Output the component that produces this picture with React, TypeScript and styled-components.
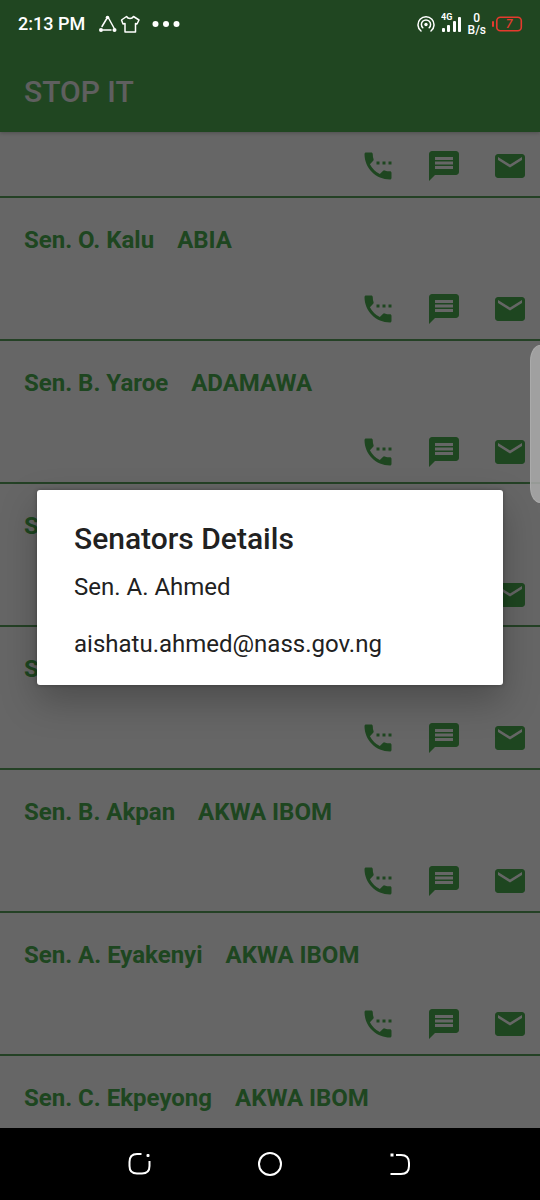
import React from "react";
import styled, { createGlobalStyle } from "styled-components";
import { MdEmail, MdMessage, MdSettingsPhone } from "react-icons/md";

const GlobalStyle = createGlobalStyle`
  * { box-sizing: border-box; }
  body { margin: 0; background: #000; font-family: Roboto, "Noto Sans", sans-serif; }
  h1, h2, p, ul { margin: 0; padding: 0; }
  button { margin: 0; padding: 0; border: 0; background: none; color: inherit; font: inherit; }
`;

const Phone = styled.div`
  position: relative;
  display: flex;
  flex-direction: column;
  height: 100vh;
  overflow: hidden;
`;

const Screen = styled.div`
  position: relative;
  flex: 1;
  min-height: 0;
  display: flex;
  flex-direction: column;
  background: #fff;
`;

const AppBar = styled.header`
  position: relative;
  flex: none;
  padding: 72px 24px 20px;
  background: #50b053;
  box-shadow: 0 1px 4px rgba(0, 0, 0, 0.25);
`;

const AppTitle = styled.h1`
  color: #eee;
  font-size: 30px;
  line-height: 40px;
  font-weight: 500;
`;

const List = styled.ul`
  flex: 1;
  min-height: 0;
  overflow: hidden;
  list-style: none;
  color: #4cb050;
`;

const Row = styled.li<{ $cut?: boolean }>`
  padding: ${(p) => (p.$cut ? 16 : 28)}px 12px 12px;
  border-bottom: 2px solid #5ba25e;
`;

const Name = styled.h2`
  display: flex;
  gap: 23px;
  margin: 0 12px 37px;
  font-size: 24px;
  line-height: 28px;
  font-weight: 700;
  white-space: nowrap;
`;

const Actions = styled.div`
  display: flex;
  justify-content: flex-end;
  gap: 30px;
`;

const IconButton = styled.button`
  display: flex;
  width: 36px;
  height: 36px;
  font-size: 36px;
`;

const Scrim = styled.div`
  position: absolute;
  inset: 0;
  display: flex;
  align-items: center;
  justify-content: center;
  padding: 46px 37px 0;
  background: rgba(0, 0, 0, 0.6);
`;

const Dialog = styled.section`
  width: 100%;
  padding: 31px 37px 27px;
  border-radius: 3px;
  background: #fff;
  color: #212121;
  box-shadow: 0 16px 36px rgba(0, 0, 0, 0.25), 0 0 4px rgba(0, 0, 0, 0.3);
`;

const DialogTitle = styled.h2`
  margin-bottom: 16px;
  font-size: 30px;
  line-height: 36px;
  font-weight: 500;
`;

const DialogBody = styled.div`
  display: grid;
  gap: 29px;
  font-size: 24px;
  line-height: 28px;
`;

const StatusBar = styled.div`
  position: absolute;
  top: 0;
  left: 0;
  right: 0;
  height: 48px;
  padding: 0 17px 0 18px;
  display: flex;
  align-items: center;
  color: #fff;
`;

const Clock = styled.span`
  margin-right: 13px;
  font-size: 18px;
  line-height: 24px;
  font-weight: 500;
`;

const StatusIcons = styled.div`
  display: flex;
  align-items: center;
  margin-left: auto;
  gap: 6px;
`;

const Speed = styled.div`
  font-size: 12px;
  line-height: 12px;
  font-weight: 500;
  text-align: center;
`;

const EdgeHandle = styled.div`
  position: absolute;
  top: 345px;
  right: 0;
  width: 10px;
  height: 158px;
  border: 1px solid #aaa;
  border-right: 0;
  border-radius: 10px 0 0 10px / 16px 0 0 16px;
  background: rgba(170, 170, 170, 0.85);
`;

const NavBar = styled.nav`
  flex: none;
  display: flex;
  align-items: center;
  justify-content: center;
  gap: 94px;
  height: 72px;
  background: #000;
  color: #fff;
`;

const senators = [
  { name: "Sen. O. Kalu", state: "ABIA" },
  { name: "Sen. B. Yaroe", state: "ADAMAWA" },
  { name: "Sen. A. Ahmed", state: "ADAMAWA" },
  { name: "Sen. I. Abbo", state: "ADAMAWA" },
  { name: "Sen. B. Akpan", state: "AKWA IBOM" },
  { name: "Sen. A. Eyakenyi", state: "AKWA IBOM" },
  { name: "Sen. C. Ekpeyong", state: "AKWA IBOM" },
];

const ContactActions = () => (
  <Actions>
    <IconButton aria-label="Call"><MdSettingsPhone /></IconButton>
    <IconButton aria-label="Message"><MdMessage /></IconButton>
    <IconButton aria-label="Email"><MdEmail /></IconButton>
  </Actions>
);

const Notifications = () => (
  <svg width="84" height="24" viewBox="0 0 84 24" fill="none" stroke="currentColor" strokeLinejoin="round" strokeLinecap="round">
    <g strokeWidth="1.5">
      <path d="M8.5 7L4 14.500M10.5 6L16 16M5 18H13" />
      <path d="M28.5 4.5C30 7 34 7 35.5 4.5L41 8L39 12L37.500 11.500V20H27V11.500L25 12L23.500 8Z" />
    </g>
    <g fill="currentColor" stroke="none">
      <circle cx="9.500" cy="5.500" r="1.800" />
      <circle cx="3" cy="18" r="2" />
      <circle cx="16.500" cy="18" r="2" />
      <circle cx="57.500" cy="12" r="3" />
      <circle cx="68" cy="12" r="3" />
      <circle cx="78.500" cy="12" r="3" />
    </g>
  </svg>
);

const Hotspot = () => (
  <svg width="18" height="18" viewBox="0 0 18 18" fill="none" stroke="currentColor" strokeWidth="1.500" strokeLinecap="round">
    <path d="M4 16A8 8 0 1 1 14 16" />
    <path d="M5.800 12.800A4.600 4.600 0 1 1 12.200 12.800" />
    <circle cx="9" cy="9.500" r="1.700" fill="currentColor" stroke="none" />
  </svg>
);

const Signal = () => (
  <svg width="21" height="24" viewBox="0 0 21 24" fill="currentColor">
    <text x="0" y="8" fontSize="9" fontWeight="700">4G</text>
    <rect x="1" y="16" width="3" height="4" rx="1" />
    <rect x="6" y="13" width="3" height="7" rx="1" />
    <rect x="12" y="9" width="3" height="11" rx="1" />
    <rect x="17" y="5" width="3" height="15" rx="1" />
  </svg>
);

const Battery = () => (
  <svg width="31" height="16" viewBox="0 0 31 16" fill="#e53a2e">
    <rect x="0" y="5" width="2" height="6" rx="1" />
    <rect x="4.800" y="1.300" width="24.500" height="13.400" rx="3.500" fill="none" stroke="#e53a2e" strokeWidth="1.600" />
    <text x="17" y="12" fontSize="12" fontStyle="italic" fontWeight="500" textAnchor="middle">7</text>
  </svg>
);

const NavIcon = ({ children }: { children: React.ReactNode }) => (
  <svg width="36" height="36" viewBox="0 0 36 36" fill="none" stroke="currentColor" strokeWidth="2">
    {children}
  </svg>
);

export default function App() {
  return (
    <>
      <GlobalStyle />
      <Phone>
        <Screen>
          <AppBar>
            <AppTitle>STOP IT</AppTitle>
          </AppBar>
          <List>
            <Row $cut>
              <ContactActions />
            </Row>
            {senators.map((s) => (
              <Row key={s.name}>
                <Name>
                  <span>{s.name}</span>
                  <span>{s.state}</span>
                </Name>
                <ContactActions />
              </Row>
            ))}
          </List>
          <Scrim>
            <Dialog role="dialog" aria-labelledby="details-title">
              <DialogTitle id="details-title">Senators Details</DialogTitle>
              <DialogBody>
                <p>Sen. A. Ahmed</p>
                <p>aishatu.ahmed@nass.gov.ng</p>
              </DialogBody>
            </Dialog>
          </Scrim>
        </Screen>
        <NavBar>
          <IconButton aria-label="Recent apps">
            <NavIcon>
              <path d="M19.500 8H15Q7.500 8 7.500 16V20Q7.500 27.500 15 27.500H20Q27.500 27.500 27.500 20V15" />
              <rect x="24.500" y="8" width="3" height="3" rx="1" fill="currentColor" stroke="none" />
            </NavIcon>
          </IconButton>
          <IconButton aria-label="Home">
            <NavIcon><circle cx="18" cy="18" r="11" /></NavIcon>
          </IconButton>
          <IconButton aria-label="Back">
            <NavIcon>
              <path d="M14 9H19Q27 9 27 17V20Q27 28 19 28H8.500" />
              <rect x="8.500" y="7.500" width="3" height="3" fill="currentColor" stroke="none" />
            </NavIcon>
          </IconButton>
        </NavBar>
        <StatusBar>
          <Clock>2:13 PM</Clock>
          <Notifications />
          <StatusIcons>
            <Hotspot />
            <Signal />
            <Speed>0<br />B/s</Speed>
            <Battery />
          </StatusIcons>
        </StatusBar>
        <EdgeHandle />
      </Phone>
    </>
  );
}
